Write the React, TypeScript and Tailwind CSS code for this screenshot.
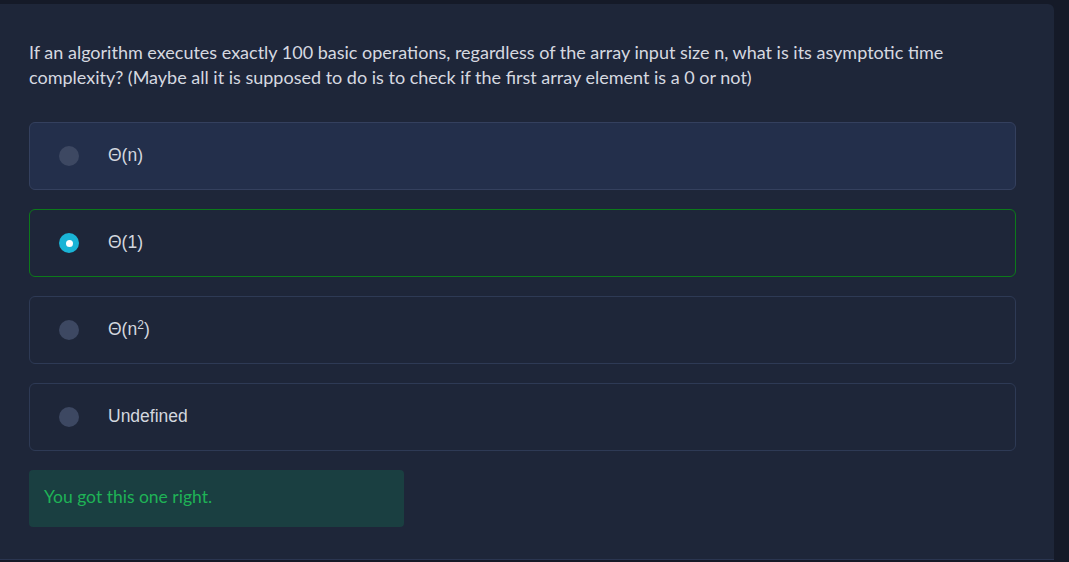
import { ReactNode } from "react";

interface Option {
  label: ReactNode;
  selected?: boolean;
  hovered?: boolean;
}

const options: Option[] = [
  { label: "Θ(n)", hovered: true },
  { label: "Θ(1)", selected: true },
  {
    label: (
      <>
        Θ(n<span className="text-[12px] relative -top-[6px]">2</span>)
      </>
    ),
  },
  { label: "Undefined" },
];

const OptionRow = ({ option }: { option: Option }) => {
  const box = option.selected
    ? "border-[#0c7a1a] bg-[#1e2639]"
    : option.hovered
      ? "border-[#34405e] bg-[#232f4b]"
      : "border-[#2e3a55] bg-[#1e2639]";

  return (
    <div
      className={`flex items-center h-[68px] border rounded-md pl-[29px] ${box}`}
    >
      {option.selected ? (
        <span className="w-5 h-5 rounded-full bg-[#1ab4d6] flex items-center justify-center">
          <span className="w-[7px] h-[7px] rounded-full bg-white" />
        </span>
      ) : (
        <span className="w-5 h-5 rounded-full bg-[#3d4862]" />
      )}
      <span className="ml-[29px] -mt-[2px] text-[17.5px] text-[#d3d7df] font-['Liberation_Sans',Arial,sans-serif]">
        {option.label}
      </span>
    </div>
  );
};

export default function App() {
  return (
    <div className="w-[1069px] h-[562px] bg-[#151a28] pt-1 overflow-hidden">
      <div className="w-[1054px] h-[556px] bg-[#1e2639] rounded-tr-md border-b border-[#2a3550] px-[29px] pt-[36px]">
        <p className="text-[18px] leading-[25px] text-[#d6d9e0] font-['Lato',sans-serif] pr-[40px]">
          If an algorithm executes exactly 100 basic operations, regardless of the array input size n, what is its asymptotic time complexity? (Maybe all it is supposed to do is to check if the first array element is a 0 or not)
        </p>

        <div className="mt-[32px] w-[987px] flex flex-col gap-[19px]">
          {options.map((o, i) => (
            <OptionRow key={i} option={o} />
          ))}
        </div>

        <div className="mt-[19px] w-[375px] h-[57px] rounded bg-[#1a3f41] flex items-center pl-[15px]">
          <span className="-mt-[3px] text-[17.5px] text-[#1fb356] font-['Lato',sans-serif]">
            You got this one right.
          </span>
        </div>
      </div>
    </div>
  );
}
